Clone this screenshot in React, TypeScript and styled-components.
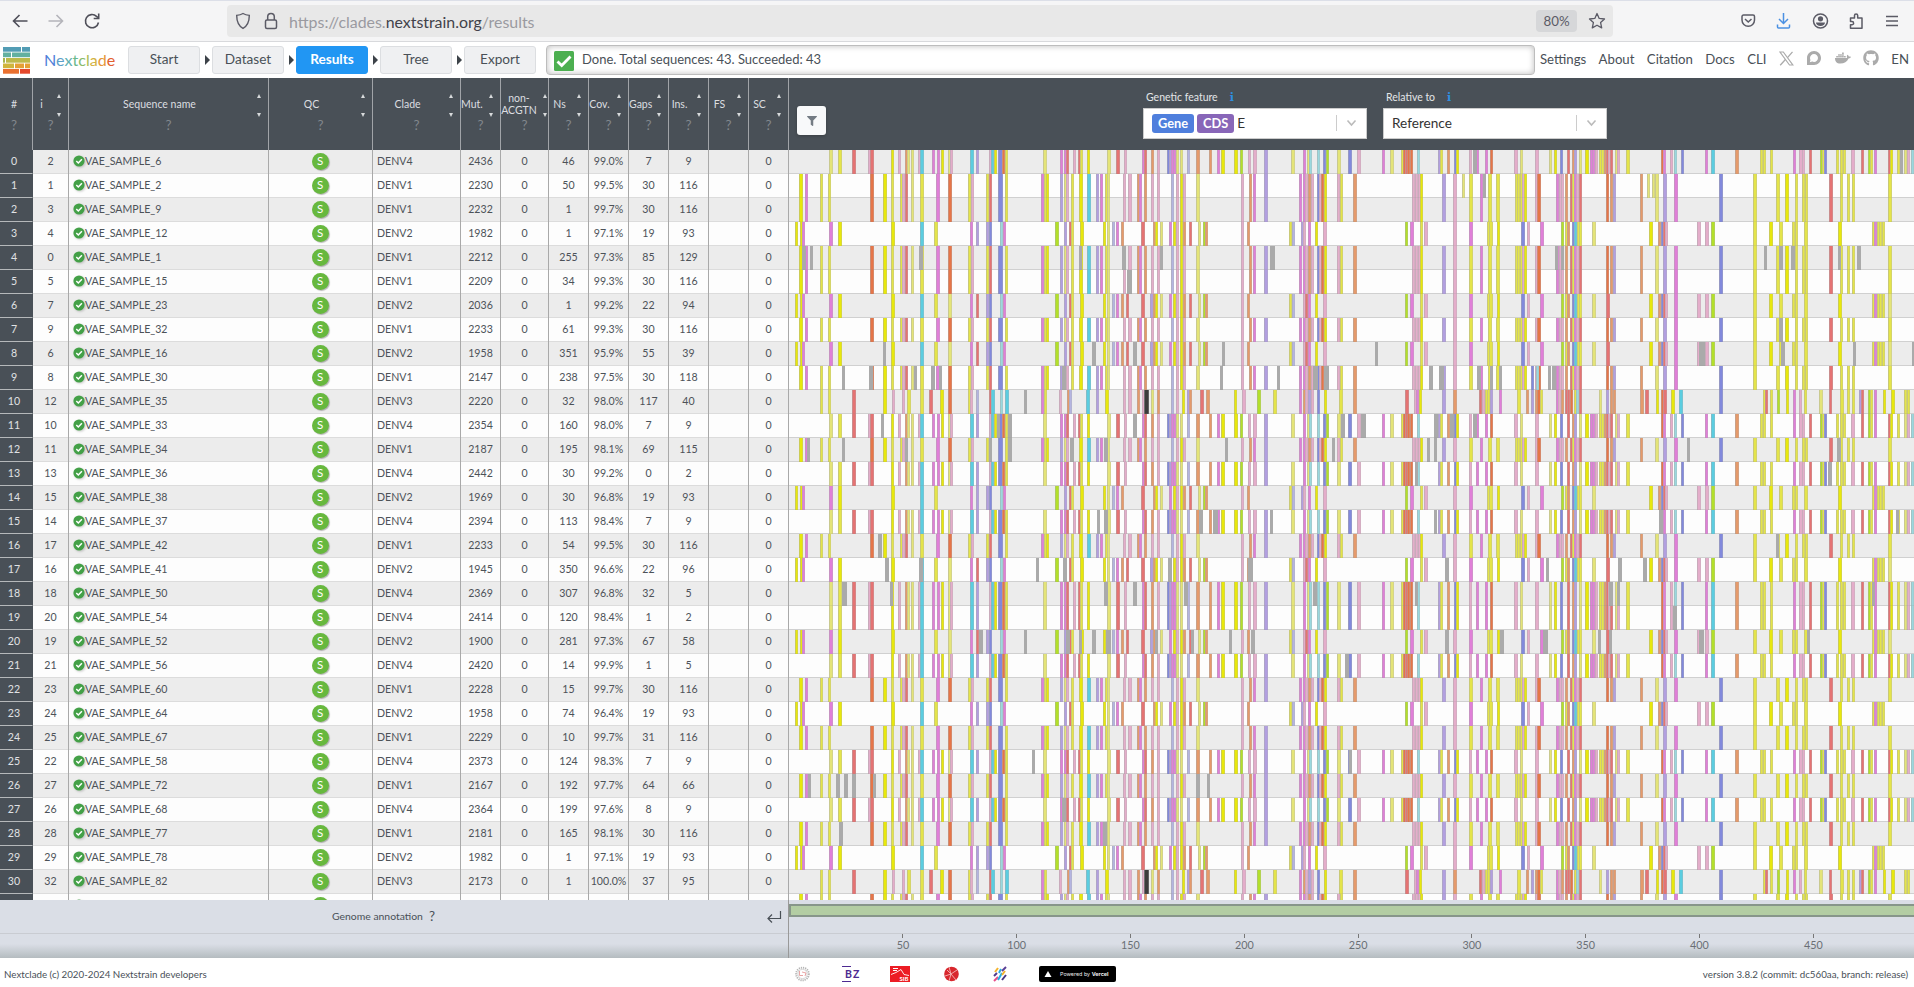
import React from 'react'
import styled, { createGlobalStyle } from 'styled-components'
import { FaGithub, FaDocker, FaDiscourse, FaFilter } from 'react-icons/fa'

const GlobalStyle = createGlobalStyle`
  * { box-sizing: border-box; }
  body { margin: 0; font-family: Lato, "Liberation Sans", sans-serif; color: #495057; background: #fff; overflow: hidden; }
`

const Page = styled.div`
  width: 1914px;
  height: 987px;
  display: flex;
  flex-direction: column;
  overflow: hidden;
`

/* ---------- browser chrome ---------- */
const Chrome = styled.div`
  height: 42px;
  flex: none;
  display: flex;
  align-items: center;
  background: #f5f5f6;
  border-top: 1px solid #dcdfe8;
  border-bottom: 1px solid #d8d9dc;
  color: #5b5b66;
`
const NavIcons = styled.div`
  width: 227px;
  display: flex;
  align-items: center;
  padding-left: 11px;
  gap: 18px;
  svg { display: block; }
`
const UrlBar = styled.div`
  width: 1386px;
  height: 32px;
  border-radius: 4px;
  background: #e8e8e8;
  display: flex;
  align-items: center;
  padding: 0 7px 0 8px;
  svg { flex: none; }
`
const LockIcon = styled.svg`
  margin: 0 11px 0 13px;
`
const Url = styled.div`
  flex: 1;
  font-size: 15.9px;
  color: #9a9aa0;
  b { font-weight: 400; color: #42424a; }
`
const Zoom = styled.div`
  width: 41px;
  height: 22px;
  line-height: 22px;
  border-radius: 4px;
  background: #d6d7d9;
  text-align: center;
  font-size: 13.3px;
  margin-right: 11px;
`
const ChromeActions = styled.div`
  flex: 1;
  display: flex;
  align-items: center;
  justify-content: flex-end;
  gap: 16px;
  padding-right: 12px;
  svg { display: block; }
`

/* ---------- navigation ---------- */
const Nav = styled.div`
  height: 36px;
  flex: none;
  display: flex;
  align-items: center;
  background: #fff;
  padding: 0 5px 0 3px;
`
const Brand = styled.div`
  width: 84px;
  padding-left: 14px;
  padding-bottom: 1px;
  font-size: 16.1px;
  white-space: nowrap;
`
const BrandLetter = styled.span<{ $color: string }>`
  color: ${(p) => p.$color};
`
const Steps = styled.div`
  display: flex;
  align-items: center;
  margin-left: 14px;
`
const Step = styled.div<{ $active?: boolean }>`
  width: 72px;
  height: 28px;
  line-height: 25px;
  border-radius: 3px;
  text-align: center;
  font-size: 13.6px;
  font-weight: ${(p) => (p.$active ? 700 : 400)};
  color: ${(p) => (p.$active ? '#fff' : '#495057')};
  background: ${(p) => (p.$active ? '#2196f3' : '#eff0f2')};
  border: 1px solid ${(p) => (p.$active ? '#2196f3' : '#dcdee1')};
`
const StepArrow = styled.div`
  width: 12px;
  display: flex;
  justify-content: center;
  padding-left: 2px;
  &::after {
    content: '';
    border: 5px solid transparent;
    border-left: 5px solid #3d4349;
    border-right: 0;
  }
`
const Status = styled.div`
  width: 989px;
  height: 30px;
  margin-left: 10px;
  border: 1px solid #bdbdbd;
  border-radius: 4px;
  box-shadow: inset 0 0 6px #bbb;
  display: flex;
  align-items: center;
  gap: 8px;
  padding: 0 0 0 7px;
  font-size: 13px;
  span { margin-top: -3px; }
  svg { margin-top: 1px; }
`
const Links = styled.div`
  flex: 1;
  display: flex;
  align-items: center;
  justify-content: space-between;
  padding-left: 5px;
  margin-top: -2px;
  font-size: 13.2px;
  svg { color: #ababab; font-size: 16px; display: block; margin-top: -2px; }
`

/* ---------- table ---------- */
const Header = styled.div`
  height: 72px;
  flex: none;
  display: flex;
  background: #495057;
  color: #dcdee0;
`
const HeadCell = styled.div<{ $w: number; $shift?: number }>`
  width: ${(p) => p.$w}px;
  border-right: 1px solid #a1a4a8;
  padding-right: ${(p) => p.$shift ?? 0}px;
  display: flex;
  flex-direction: column;
  align-items: center;
`
const HeadTop = styled.div`
  width: 100%;
  height: 36px;
  margin-top: 8px;
  display: flex;
  align-items: center;
  font-size: 10.5px;
`
const HeadName = styled.div<{ $tight?: boolean }>`
  flex: 1;
  text-align: center;
  line-height: 12px;
  white-space: pre-line;
  min-width: 0;
  padding-bottom: 1px;
  margin-left: ${(p) => (p.$tight ? -4 : 0)}px;
`
const Sort = styled.div<{ $tight?: boolean }>`
  width: ${(p) => (p.$tight ? 8 : 18)}px;
  height: 23px;
  margin-top: 2px;
  margin-right: ${(p) => (p.$tight ? -1 : 0)}px;
  display: flex;
  flex-direction: column;
  align-items: center;
  justify-content: space-between;
  &::before { content: ''; border: 2.5px solid transparent; border-top: 0; border-bottom: 4px solid #d8dadc; }
  &::after { content: ''; border: 2.5px solid transparent; border-bottom: 0; border-top: 4px solid #d8dadc; }
`
const Help = styled.div`
  font-size: 13.5px;
  line-height: 14px;
  margin-top: -4px;
  color: #82878c;
`
const ViewHead = styled.div`
  flex: 1;
  display: flex;
  padding-left: 8px;
`
const FilterButton = styled.div`
  width: 29px;
  height: 29px;
  margin-top: 28px;
  margin-right: 317px;
  border-radius: 3px;
  background: #f8f9fa;
  box-shadow: 0 1px 3px #2225;
  display: flex;
  align-items: center;
  justify-content: center;
  color: #747c84;
  font-size: 10px;
`
const Picker = styled.div`
  width: 224px;
  margin-right: 16px;
  padding-top: 13px;
`
const PickerLabel = styled.div`
  height: 17px;
  line-height: 12px;
  padding-left: 3px;
  font-size: 10.5px;
  display: flex;
  gap: 12px;
  color: #e4e6e8;
  i { font: 700 11px "DejaVu Serif", serif; line-height: 14px; color: #2e8fe0; }
`
const PickerBox = styled.div`
  height: 31px;
  background: #fff;
  border: 1px solid #ccc;
  display: flex;
  align-items: center;
  padding: 0 0 1px 8px;
  font-size: 13.6px;
  color: #333;
`
const PickerValue = styled.div`
  flex: 1;
  display: flex;
  align-items: center;
  gap: 3px;
`
const Badge = styled.span<{ $bg: string }>`
  background: ${(p) => p.$bg};
  color: #fff;
  font-weight: 700;
  font-size: 12.8px;
  height: 19px;
  line-height: 18px;
  padding: 0 6px;
  border-radius: 3px;
`
const Divider = styled.div`
  width: 1px;
  height: 16px;
  background: #ccc;
  margin-right: 9px;
`
const Chevron = styled.svg`
  width: 11px;
  height: 8px;
  margin-right: 9px;
`
const Body = styled.div`
  height: 750px;
  flex: none;
  overflow: hidden;
`
const Row = styled.div<{ $odd: boolean }>`
  height: 24px;
  display: flex;
  background: ${(p) => (p.$odd ? '#fdfdfd' : '#ececec')};
  box-shadow: inset 0 -1px #dcdcdc;
  font-size: 10.6px;
  color: #4c5258;
`
const Cell = styled.div<{ $w: number; $left?: boolean }>`
  width: ${(p) => p.$w}px;
  flex: none;
  display: flex;
  align-items: center;
  justify-content: ${(p) => (p.$left ? 'flex-start' : 'center')};
  padding-left: ${(p) => (p.$left ? 4 : 0)}px;
  padding-bottom: 2px;
  border-right: 1px solid #a9a9a9;
  white-space: nowrap;
`
const IndexCell = styled(Cell)`
  background: #495057;
  color: #e0e2e4;
  border-right-color: #495057;
  border-bottom: 1px solid #b5b8ba;
  padding-right: 4px;
  padding-bottom: 1px;
`
const Quality = styled.div`
  width: 17px;
  height: 17px;
  margin: 1px 1px 0 0;
  border-radius: 50%;
  background: #67b83e;
  box-shadow: 1px 1px 1px #0004;
  color: #fff;
  text-align: center;
  font-size: 11.5px;
  line-height: 16px;
`
const Track = styled.svg`
  width: 1125px;
  height: 24px;
  display: block;
`
const CheckIcon = styled.svg`
  filter: drop-shadow(1px 1px 1px #0003);
`

/* ---------- genome annotation ---------- */
const Genome = styled.div`
  height: 58px;
  flex: none;
  display: flex;
  background: linear-gradient(transparent 44px, #8f9a9a80 58px), #dadee6;
`
const GenomeLeft = styled.div`
  width: 789px;
  border-right: 1px solid #999;
`
const GenomeTitle = styled.div`
  height: 34px;
  border-bottom: 1px solid #c9ccd2;
  display: flex;
  align-items: center;
  padding-left: 332px;
  padding-bottom: 2px;
  font-size: 10.4px;
  span { margin-left: 6px; font-size: 13.5px; flex: 1; }
  svg { margin: 4px 6px 0 0; }
`
const GenomeRight = styled.div`
  flex: 1;
`
const GeneLane = styled.div`
  height: 34px;
  padding-top: 4px;
  border-bottom: 1px solid #c9ccd2;
`
const GeneBar = styled.div`
  height: 13px;
  background: #b3cda3;
  border: 2px solid #87968a;
  border-right: 0;
`
const Axis = styled.div`
  display: flex;
  padding-left: 57px;
`
const Tick = styled.div`
  width: 113.8px;
  display: flex;
  flex-direction: column;
  align-items: center;
  font-size: 10.8px;
  line-height: 13px;
  color: #6a6f75;
  &::before { content: ''; width: 1px; height: 4px; background: #777; }
`

/* ---------- footer ---------- */
const Footer = styled.div`
  flex: 1;
  display: flex;
  align-items: center;
  padding: 2px 6px 0 4px;
  font-size: 9.75px;
  background: #fff;
`
const Copyright = styled.div`
  width: 791px;
`
const Logos = styled.div`
  display: flex;
  align-items: center;
  svg { display: block; }
`
const Logo = styled.div<{ $gap: number }>`
  margin-right: ${(p) => p.$gap}px;
`
const LogoText = styled.div`
  width: 17px;
  height: 16px;
  font-size: 10.5px;
  line-height: 16px;
  font-weight: 700;
  color: #4d2a91;
  letter-spacing: 1px;
  padding-left: 3px;
  background: linear-gradient(#4d2a91, #4d2a91) 0 0 / 9px 1px no-repeat, linear-gradient(#4d2a91, #4d2a91) 0 100% / 9px 1px no-repeat;
`
const Vercel = styled.div`
  width: 77px;
  height: 16px;
  border-radius: 2px;
  background: #000;
  color: #eee;
  display: flex;
  align-items: center;
  gap: 8px;
  padding-left: 5px;
  font: 5.4px/16px Inter, sans-serif;
  white-space: nowrap;
`
const Version = styled.div`
  margin-left: auto;
`

/* Marker colours by amino acid group */
const COLORS: Record<string, string> = {
  y: '#e8e80c', k: '#e4e478', K: '#e4e44a', m: '#e07fd8', p: '#e4adca', r: '#e57373',
  o: '#e67548', s: '#e59a6b', u: '#b29fe0', l: '#b4b4e0', b: '#8289dc', c: '#5bcde0',
  a: '#9ad8de', g: '#b3e02a', n: '#aaaaaa', x: '#3c3c3c',
}

const DENV1 =
  '10y4 16m 31K 39K 81o4 94y4 102K 111K 113p 116r 122k 131K4 147m4 159o4 179K 182p 197K 200r 209b5 216K 252m 255K 257y 271u 275k 277p 282K 290y4 298c4 307u 311m 316K 318k 334p 339p4 348s 350m 355s 362p 368p ' +
  '382l 387p 391y 394p 407k4 452p 460s 464m 475u4 510m 514m 516p 519s 522p 528b 530p 532o 535y 548p 551K 564s4 623p 626p 629p 631y 653u4 664p4 680K4 691m 699K4 707K4 726K 728K 731K 733p 735y 746p 748o4 ' +
  '767m 770p 772p 776s 781r 783K 785m 787p 790r 817o 821s 824u 851s 866k4 874u4 885m4 930b4 964K4 987K4 996y4 1006K 1013K 1016K 1040r4 1051K 1058K 1063K 1099K4'
const DENV2 =
  '6y 11y 13m 40m4 49y4 102y4 131c4 145K4 181m 187u 197u 200b 211a 214m 266g4 275u 280r 282K 291y4 314y 318k 323l 327m 332s 352r4 364s 366y 371k ' +
  '380m 384y 387p 391y 394s 400r 409k 414g 416s 452p 458s 500K 503l 512u 514p 519m 526y 534p4 616g 621m4 631K 635p4 664p4 680m4 698K 700K4 708y 732b4 738p ' +
  '751m4 772g 776K 778s 783b 785c 788K 790K 803k4 860y4 869s 872b 874r 876p 908p4 916p4 922g4 964K4 980y4 990K4 1003K 1006K 1015K4 1049y4 1083K 1085m 1088K 1090K 1093K'
const DENV2B = DENV2.replace('187u', '159k4 187r').replace('332s', '332s 337r').replace('364s', '361u 364s').replace('512u 514p', '514p 516r') + ' 817r4 885m4 1099k4'
const DENV3 =
  '31K 39K 63r4 94y4 103p 113p 118K4 131K4 140r4 151y4 159o4 179K 181p 187l 200r 202c4 211a 216c4 252m 255K 270p 278s 280l 297c4 307u 316y4 334p 339p4 348s 353p 355x5 362k 368s ' +
  '382l 387p 393y 398u 400s 411r4 417s4 445y 453p4 468g4 484K4 510m 514s 516p 519u 522p 528b 535y 550K4 564s4 616r4 625p 627m 630y 653u4 664s4 690r 693p 696K 698K 701u 710m 728K4 737s 742u 746s ' +
  '748o4 751K 767m 769p 772s 776r 778r 781o 785K 787a 790r 810k 817u 821s 824s 851s4 856r4 867y 872o 874r4 882y4 890c4 930b4 974K 976r 981K 988g 997y 1004m 1010p 1015K 1030k4 1040r 1051K4 1058K 1063K 1070u 1072r 1079g 1081K 1085m 1094y 1102y4 1115K 1118K'
const DENV4 =
  '40k4 49K4 63r4 79p 81r4 102y 109p 116s 118k 122k 129p 131c4 143m 148m 152y 159k 161p 181c4 187u 200p 202c 205y 209b5 213o 216K 254k4 271m 275m 277r 284p 289r 291K 298y 318k4 327r4 335p 353m 355r 362s 368p ' +
  '378b 380u 382m 384m 387k 391k 398l 407s4 420s 428m 432y4 445y4 451g 459p 464p4 475u4 502k4 514m 518k 520a 528a 534b 537g 548k4 559b4 568p4 593m 601k4 612K 614o 616r 618o 621o 628a 649u 651K 658s 665b 667y 680p 687m 696m 701o 725p4 731k 746p4 ' +
  '760k 765y 771b 778r 783s 785u 790k 796y4 801m 803m 806p 810K 812K 815s 817r 819p 821r 826k 828p 837K4 872o 874m 881p 885a 892b 916m 922c4 946s4 971K 974K 981K 1004m 1010p4 1013p 1020r 1031g 1033K 1035b 1047K 1051K 1054K 1062p4 1072r 1079g 1081K 1085m 1099r 1101y 1108K 1115k 1118p 1122a'

type Sample = [string, string, number, string, string, string, string, string, string, string]

/* i, name, pattern, mutations, Ns, coverage, gaps, insertions, missing ranges, clade */
const SAMPLES: Sample[] = [
  ['2', '6', 4, '2436', '46', '99.0%', '7', '9', '684n4 1111n', 'DENV4'],
  ['1', '2', 1, '2230', '50', '99.5%', '30', '116', '673k 694n 858k 863k', 'DENV1'],
  ['3', '9', 1, '2232', '1', '99.7%', '30', '116', '', 'DENV1'],
  ['4', '12', 2, '1982', '1', '97.1%', '19', '93', '', 'DENV2'],
  ['0', '1', 1, '2212', '255', '97.3%', '85', '129', '13n4 21n 130n4 290n 333n4 371n 481n5 766n 772n 975n 990n4 1002n4 1049n 1068n4', 'DENV1'],
  ['5', '15', 1, '2209', '34', '99.3%', '30', '116', '338n5', 'DENV1'],
  ['7', '23', 5, '2036', '1', '99.2%', '22', '94', '', 'DENV2'],
  ['9', '32', 1, '2233', '61', '99.3%', '30', '116', '990n4', 'DENV1'],
  ['6', '16', 5, '1958', '351', '95.9%', '55', '39', '94n 303n4 344n4 433n 586n 910n6 992n4 1064n 1123n', 'DENV2'],
  ['8', '30', 1, '2147', '238', '97.5%', '30', '118', '53n 80n4 125n 142n4 150n 273n4 431n 488n 524n5 535n5 640n4 650n5 688n4 701n 710n 742b 747a 759n 763n4', 'DENV1'],
  ['12', '35', 3, '2220', '32', '98.0%', '117', '40', '235n', 'DENV3'],
  ['10', '33', 4, '2354', '160', '98.0%', '7', '9', '92n 208n 219n4 344n4 552n4 572n5 645n4 661n4 684n4', 'DENV4'],
  ['11', '34', 1, '2187', '195', '98.1%', '69', '115', '18n 53n 116n 200n 219n4 281n4 315n4 436n 543n 638n 645n 898n 1048n4', 'DENV1'],
  ['13', '36', 4, '2442', '30', '99.2%', '0', '2', '626n 1039n4', 'DENV4'],
  ['15', '38', 2, '1969', '30', '96.8%', '19', '93', '', 'DENV2'],
  ['14', '37', 4, '2394', '113', '98.4%', '7', '9', '308n 315n4 410n4 424n5 481n 645n 870n4 1107n', 'DENV4'],
  ['17', '42', 1, '2233', '54', '99.5%', '30', '116', '89n4 987n', 'DENV1'],
  ['16', '41', 5, '1945', '350', '96.6%', '22', '96', '96n4 130n4 247n 274n4 379n4 459n5 656n4 757n 829n4 854n4', 'DENV2'],
  ['18', '50', 4, '2369', '307', '96.8%', '32', '5', '53n5 101n 315n4 344n4 395n4 524n4 626n 820n4 828n 1083n', 'DENV4'],
  ['20', '54', 4, '2414', '120', '98.4%', '1', '2', '884n4', 'DENV4'],
  ['19', '52', 5, '1900', '281', '97.3%', '67', '58', '190n4 235n 277n4 290n 303n4 317n5 366n 402n 440n 462n4 656n4 711n4 754n5 809n 820n 910n5 1018n', 'DENV2'],
  ['21', '56', 4, '2420', '14', '99.9%', '1', '5', '556n4', 'DENV4'],
  ['23', '60', 1, '2228', '15', '99.7%', '30', '116', '', 'DENV1'],
  ['24', '64', 2, '1958', '74', '96.4%', '19', '93', '', 'DENV2'],
  ['25', '67', 1, '2229', '10', '99.7%', '31', '116', '', 'DENV1'],
  ['22', '58', 4, '2373', '124', '98.3%', '7', '9', '243n 560n', 'DENV4'],
  ['27', '72', 1, '2167', '192', '97.7%', '64', '66', '19n 47n4 55n4 63n4 84n 407n4 418n', 'DENV1'],
  ['26', '68', 4, '2364', '199', '97.6%', '8', '9', '273n4', 'DENV4'],
  ['28', '77', 1, '2181', '165', '98.1%', '30', '116', '50n4 314n4', 'DENV1'],
  ['29', '78', 2, '1982', '1', '97.1%', '19', '93', '', 'DENV2'],
  ['32', '82', 3, '2173', '1', '100.0%', '37', '95', '', 'DENV3'],
  ['30', '80', 1, '2230', '1', '99.7%', '30', '116', '', 'DENV1'],
]
const PATTERNS = ['', DENV1, DENV2, DENV3, DENV4, DENV2B]

const COLUMNS: [string, number][] = [
  ['#', 33], ['i', 36], ['Sequence name', 200], ['QC', 104], ['Clade', 88], ['Mut.', 40], ['non-\nACGTN', 48],
  ['Ns', 40], ['Cov.', 40], ['Gaps', 40], ['Ins.', 40], ['FS', 40], ['SC', 40],
]

function Mutations({ marks }: { marks: string }) {
  return (
    <Track viewBox="0 0 1125 24" shapeRendering="crispEdges">
      {marks.trim().split(/\s+/).map((m, i) => {
        const [, x, c, w] = /^(\d+)(\w)(\d*)$/.exec(m)!
        const width = Number(w || 3)
        return (
          <g key={i}>
            <rect x={x} y={0} width={width} height={24} fill={COLORS[c]} />
            {c !== 'n' && <rect x={x} y={0} width={1} height={24} fill="#aaaaaa78" />}
            {c !== 'n' && <rect x={Number(x) + width - 1} y={0} width={1} height={24} fill="#b4b4b450" />}
          </g>
        )
      })}
      <rect x={0} y={23} width={1125} height={1} fill="#8882" />
    </Track>
  )
}

function CheckDot() {
  return (
    <CheckIcon width="12" height="14" viewBox="0 0 12 14">
      <circle cx="6" cy="7" r="5.6" fill="#43a047" />
      <path d="M3.3 7l2 2 3.6-3.8" fill="none" stroke="#fff" strokeWidth="1.5" />
    </CheckIcon>
  )
}

function BrickLogo() {
  const rows: [number, number, string][][] = [
    [[0, 18, '#529cb4'], [19, 8, '#529cb4']],
    [[0, 8, '#62b0a0'], [9, 18, '#62b0a0']],
    [[0, 2, '#a5b44c'], [3, 24, '#bcb94a']],
    [[0, 11, '#d0b53c'], [12, 9, '#e59f35'], [22, 5, '#e59f35']],
    [[0, 16, '#e9702f'], [17, 10, '#e5492d']],
  ]
  return (
    <svg width="27" height="27" viewBox="0 0 27 27">
      {rows.flatMap((r, i) => r.map(([x, w, c]) => <rect key={`${i}-${x}`} x={x} y={i * 5.5} width={w} height={4.7} fill={c} />))}
    </svg>
  )
}

function XLogo() {
  return (
    <svg width="15" height="15" viewBox="0 0 15 15" fill="none" stroke="currentColor">
      <path d="M1 1h3.300l9.500 13h-3.300z" strokeWidth="1.200" />
      <path d="M13.500 .8L8.500 6.600M6.400 8.500L1.200 14.200" strokeWidth="1.300" />
    </svg>
  )
}

const BRAND = [
  ['N', '#5081d9'], ['e', '#5da0c9'], ['x', '#62b0b0'], ['t', '#6ab98c'], ['c', '#8abb6a'], ['l', '#acbd51'],
  ['a', '#d3b240'], ['d', '#e69738'], ['e', '#e3602f'],
]

export default function App() {
  return (
    <Page>
      <GlobalStyle />
      <Chrome>
        <NavIcons>
          <svg width="18" height="18" viewBox="0 0 18 18" fill="none" stroke="#4f4f59" strokeWidth="1.6"><path d="M16.5 9H2.5M8.5 3l-6 6 6 6" /></svg>
          <svg width="18" height="18" viewBox="0 0 18 18" fill="none" stroke="#b4b4ba" strokeWidth="1.6"><path d="M1.5 9h14M9.500 3l6 6-6 6" /></svg>
          <svg width="18" height="18" viewBox="0 0 18 18" fill="none" stroke="#4f4f59" strokeWidth="1.6"><path d="M15.500 10.500A6.600 6.600 0 1 1 13.500 4.300L15 5.600" /><path d="M15.700 1.500v5h-5" /></svg>
        </NavIcons>
        <UrlBar>
          <svg width="16" height="18" viewBox="0 0 16 18" fill="none" stroke="#5b5b66" strokeWidth="1.4"><path d="M8 1.500c2 1.200 4 1.700 6.300 1.900C14.300 9 12.800 13.500 8 16.400 3.200 13.500 1.700 9 1.700 3.400 4 3.200 6 2.700 8 1.500z" /></svg>
          <LockIcon width="14" height="18" viewBox="0 0 14 18" fill="none" stroke="#5b5b66" strokeWidth="1.5"><rect x="1.500" y="8" width="11" height="8.500" rx="1.500" /><path d="M3.700 8V4.800a3.300 3.300 0 0 1 6.600 0V8" /></LockIcon>
          <Url>https://clades.<b>nextstrain.org</b>/results</Url>
          <Zoom>80%</Zoom>
          <svg width="18" height="18" viewBox="0 0 18 18" fill="none" stroke="#5b5b66" strokeWidth="1.3" strokeLinejoin="round"><path d="M9 1.500l2.200 4.900 5.300.6-3.900 3.600 1.100 5.300L9 13.200l-4.700 2.700 1.100-5.300L1.500 7l5.300-.6z" /></svg>
        </UrlBar>
        <ChromeActions>
          <svg width="20" height="18" viewBox="0 0 20 18" fill="none" stroke="#5b5b66" strokeWidth="1.500"><path d="M5.500 3h9.500a1.500 1.500 0 0 1 1.500 1.500V8a6.250 6.250 0 0 1-12.500 0V4.500A1.500 1.500 0 0 1 5.500 3z" /><path d="M7 7l3.250 3 3.250-3" /></svg>
          <svg width="20" height="18" viewBox="0 0 20 18" fill="none" stroke="#4a90e2" strokeWidth="1.500"><path d="M9.500 1v10M5 7l4.500 4.500L14 7M3.500 12.500V15a1 1 0 0 0 1 1h10a1 1 0 0 0 1-1v-2.500" /></svg>
          <svg width="20" height="18" viewBox="0 0 20 18" fill="none" stroke="#5b5b66" strokeWidth="1.500"><circle cx="10.500" cy="9" r="7" /><circle cx="10.500" cy="6.800" r="2.600" fill="#5b5b66" stroke="none" /><path d="M6 10.500h9c0 2-2 3.500-4.500 3.500S6 12.500 6 10.500z" fill="#5b5b66" stroke="none" /></svg>
          <svg width="20" height="18" viewBox="0 0 20 18" fill="none" stroke="#5b5b66" strokeWidth="1.500" strokeLinejoin="round"><path d="M4.500 6h4V3.500a1.600 1.600 0 0 1 3.200 0V6h4.300v10.200H4.500v-3.400H6a1.600 1.600 0 0 0 0-3.200H4.500z" /></svg>
          <svg width="20" height="18" viewBox="0 0 20 18" fill="none" stroke="#5b5b66" strokeWidth="1.500"><path d="M4 4.500h12M4 9h12M4 13.500h12" /></svg>
        </ChromeActions>
      </Chrome>

      <Nav>
        <BrickLogo />
        <Brand>{BRAND.map(([l, c], i) => <BrandLetter key={i} $color={c}>{l}</BrandLetter>)}</Brand>
        <Steps>
          {['Start', 'Dataset', 'Results', 'Tree', 'Export'].map((s, i) => (
            <React.Fragment key={s}>
              {i > 0 && <StepArrow />}
              <Step $active={s === 'Results'}>{s}</Step>
            </React.Fragment>
          ))}
        </Steps>
        <Status>
          <svg width="20" height="20" viewBox="0 0 20 20"><rect width="20" height="20" rx="1.500" fill="#4caf50" /><path d="M3.500 10.500l4.200 4L16.500 5.500" fill="none" stroke="#fff" strokeWidth="2.800" /></svg>
          <span>Done. Total sequences: 43. Succeeded: 43</span>
        </Status>
        <Links>
          <span>Settings</span><span>About</span><span>Citation</span><span>Docs</span><span>CLI</span>
          <XLogo /><FaDiscourse /><FaDocker /><FaGithub />
          <span>EN</span>
        </Links>
      </Nav>

      <Header>
        {COLUMNS.map(([name, w], i) => (
          <HeadCell key={name} $w={w} $shift={i === 0 ? 4 : 0}>
            <HeadTop>
              <HeadName $tight={i === 6}>{name}</HeadName>
              {i > 0 && <Sort $tight={i === 6} />}
            </HeadTop>
            <Help>?</Help>
          </HeadCell>
        ))}
        <ViewHead>
          <FilterButton><FaFilter /></FilterButton>
          <Picker>
            <PickerLabel>Genetic feature <i>i</i></PickerLabel>
            <PickerBox>
              <PickerValue><Badge $bg="#4f7fdd">Gene</Badge><Badge $bg="#8866b8">CDS</Badge>E</PickerValue>
              <Divider /><Chevron viewBox="0 0 11 8"><path d="M1.500 1.500l4 4.500 4-4.500" fill="none" stroke="#bbb" strokeWidth="1.600" /></Chevron>
            </PickerBox>
          </Picker>
          <Picker>
            <PickerLabel>Relative to <i>i</i></PickerLabel>
            <PickerBox>
              <PickerValue>Reference</PickerValue>
              <Divider /><Chevron viewBox="0 0 11 8"><path d="M1.500 1.500l4 4.500 4-4.500" fill="none" stroke="#bbb" strokeWidth="1.600" /></Chevron>
            </PickerBox>
          </Picker>
        </ViewHead>
      </Header>

      <Body>
        {SAMPLES.map(([id, name, pat, mut, ns, cov, gaps, ins, extra, clade], i) => (
          <Row key={i} $odd={i % 2 === 1}>
            <IndexCell $w={33}>{i}</IndexCell>
            <Cell $w={36}>{id}</Cell>
            <Cell $w={200} $left><CheckDot />VAE_SAMPLE_{name}</Cell>
            <Cell $w={104}><Quality>S</Quality></Cell>
            <Cell $w={88} $left>{clade}</Cell>
            <Cell $w={40}>{mut}</Cell>
            <Cell $w={48}>0</Cell>
            <Cell $w={40}>{ns}</Cell>
            <Cell $w={40}>{cov}</Cell>
            <Cell $w={40}>{gaps}</Cell>
            <Cell $w={40}>{ins}</Cell>
            <Cell $w={40} />
            <Cell $w={40}>0</Cell>
            <Mutations marks={`${PATTERNS[pat]} ${extra}`} />
          </Row>
        ))}
      </Body>

      <Genome>
        <GenomeLeft>
          <GenomeTitle>
            Genome annotation <span>?</span>
            <svg width="15" height="13" viewBox="0 0 15 13" fill="none" stroke="#495057" strokeWidth="1.200"><path d="M13.500 0v7.500H1.500M5 3.500l-4 4 4 4" /></svg>
          </GenomeTitle>
        </GenomeLeft>
        <GenomeRight>
          <GeneLane><GeneBar /></GeneLane>
          <Axis>{[50, 100, 150, 200, 250, 300, 350, 400, 450].map((t) => <Tick key={t}>{t}</Tick>)}</Axis>
        </GenomeRight>
      </Genome>

      <Footer>
        <Copyright>Nextclade (c) 2020-2024 Nextstrain developers</Copyright>
        <Logos>
          <Logo $gap={32}>
            <svg width="15" height="16" viewBox="0 0 15 16" fill="none"><circle cx="7.500" cy="8" r="6.300" stroke="#b5b5b5" strokeWidth="2" strokeDasharray="1.200 .9" /><circle cx="7.500" cy="8" r="4.600" stroke="#ccc" strokeWidth=".8" /><path d="M4.500 5v4.500h3.500M7 6l4 1-1 3" stroke="#e79a9a" strokeWidth=".9" /></svg>
          </Logo>
          <Logo $gap={31}><LogoText>BZ</LogoText></Logo>
          <Logo $gap={34}>
            <svg width="20" height="16" viewBox="0 0 20 16"><rect width="20" height="16" fill="#ec1c24" /><path d="M1 8.500l5-2 5-3 3 5 5 1" fill="none" stroke="#fff" strokeWidth=".9" /><path d="M3 2.500h5M3 4.500h4" stroke="#fff" strokeWidth="1" /><text x="9.500" y="15" fontSize="6" fontWeight="700" fill="#fff">SIB</text></svg>
          </Logo>
          <Logo $gap={34}>
            <svg width="15" height="16" viewBox="0 0 15 16"><circle cx="7.500" cy="8" r="7.300" fill="#d8272d" /><path d="M5 1l2 7-6 2M7 8l6-4M7 8l5 6M5 15l2-7M3 4l4 4" fill="none" stroke="#f4b5b7" strokeWidth=".9" /></svg>
          </Logo>
          <Logo $gap={32}>
            <svg width="14" height="16" viewBox="0 0 14 16" fill="none" strokeWidth="2"><path d="M2 6l3-4" stroke="#f5b32c" /><path d="M6 7l2-4" stroke="#29abe2" /><path d="M9 5l4-4" stroke="#5b3f95" /><path d="M1 10l3-3" stroke="#4f3a8c" /><path d="M1 15l4-4" stroke="#e94f8a" /><path d="M5 14l4-7" stroke="#29abe2" /><path d="M9 9l3-4" stroke="#f5b32c" /><path d="M9 14l4-5" stroke="#453680" /></svg>
          </Logo>
          <Vercel>
            <svg width="8" height="6" viewBox="0 0 8 6"><path d="M4 0l3.500 6h-7z" fill="#fff" /></svg>
            <span>Powered by <b>Vercel</b></span>
          </Vercel>
        </Logos>
        <Version>version 3.8.2 (commit: dc560aa, branch: release)</Version>
      </Footer>
    </Page>
  )
}
